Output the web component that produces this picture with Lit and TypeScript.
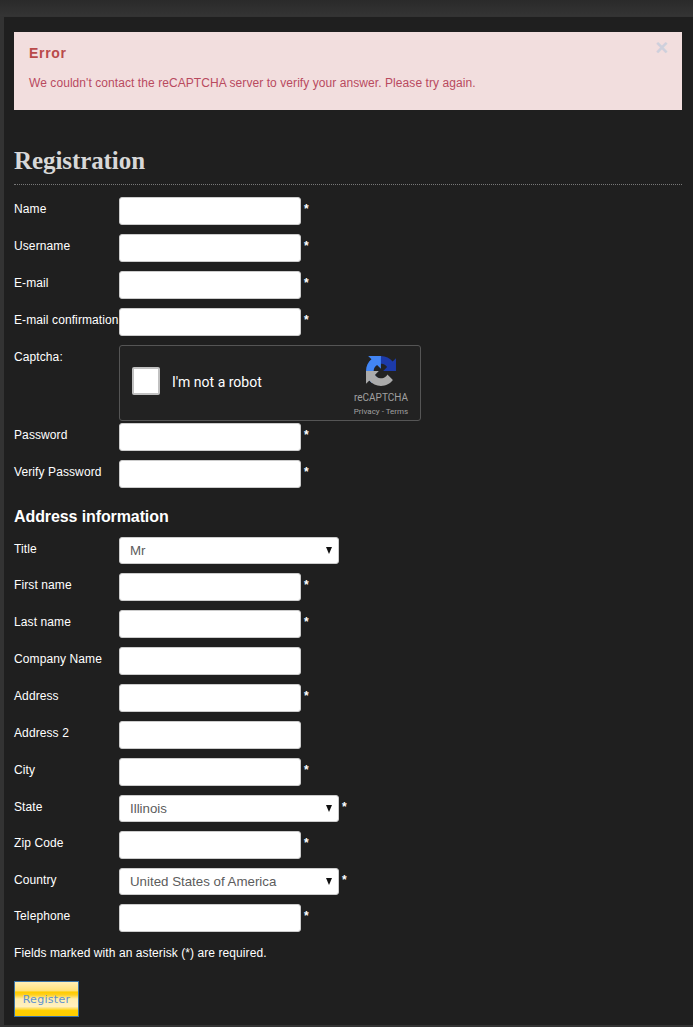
import { LitElement, html, css, svg } from "lit";
import { customElement } from "lit/decorators.js";

type Row = { label: string; req?: boolean; select?: string };

const top: Row[] = [
  { label: "Name", req: true },
  { label: "Username", req: true },
  { label: "E-mail", req: true },
  { label: "E-mail confirmation", req: true },
];
const pw: Row[] = [
  { label: "Password", req: true },
  { label: "Verify Password", req: true },
];
const addr: Row[] = [
  { label: "Title", select: "Mr" },
  { label: "First name", req: true },
  { label: "Last name", req: true },
  { label: "Company Name" },
  { label: "Address", req: true },
  { label: "Address 2" },
  { label: "City", req: true },
  { label: "State", select: "Illinois", req: true },
  { label: "Zip Code", req: true },
  { label: "Country", select: "United States of America", req: true },
  { label: "Telephone", req: true },
];

@customElement("app-root")
export class AppRoot extends LitElement {
  static styles = css`
    :host {
      display: block;
      width: 693px;
      height: 1027px;
      overflow: hidden;
      background: #333;
      font-family: "Liberation Sans", Arial, sans-serif;
      font-size: 12px;
      color: #fff;
    }
    .topbar {
      height: 16px;
      background: linear-gradient(#2a2a2a, #343434);
    }
    .panel {
      margin: 1px 0 0 4px;
      height: 1008px;
      background: #1f1f1f;
      padding: 15px 11px 0 10px;
      box-sizing: border-box;
    }
    .alert {
      position: relative;
      height: 78px;
      box-sizing: border-box;
      background: #f2dede;
      color: #b94a5e;
      padding: 13px 15px;
    }
    .alert h4 {
      margin: 0;
      font-size: 14px;
      line-height: 16px;
      font-weight: bold;
      color: #b94a4a;
      letter-spacing: 0.7px;
    }
    .alert p {
      margin: 14px 0 0;
      line-height: 16px;
      letter-spacing: 0.07px;
    }
    .close {
      position: absolute;
      right: 14px;
      top: 5px;
      font-size: 22px;
      line-height: 22px;
      font-weight: bold;
      color: #ced0dc;
    }
    h1 {
      margin: 36px 0 0;
      font-family: "Liberation Serif", "Times New Roman", serif;
      font-size: 25px;
      line-height: 29px;
      font-weight: bold;
      color: #d8d8d8;
      letter-spacing: -0.08px;
      padding-bottom: 9px;
      border-bottom: 1px dotted #777;
    }
    .form {
      margin-top: 12px;
    }
    .row {
      display: flex;
      align-items: flex-start;
      margin-bottom: 9px;
    }
    label {
      width: 105px;
      flex: none;
      line-height: 14px;
      padding-top: 5px;
      white-space: nowrap;
      letter-spacing: 0.1px;
    }
    .input {
      width: 182px;
      height: 28px;
      box-sizing: border-box;
      background: #fff;
      border: 1px solid #ccc;
      border-radius: 3px;
    }
    .select {
      display: flex;
      align-items: center;
      justify-content: space-between;
      width: 220px;
      height: 27px;
      box-sizing: border-box;
      background: #fff;
      border: 1px solid #ccc;
      border-radius: 3px;
      color: #5c5c5c;
      padding: 0 6px 0 10px;
      font-size: 13.3px;
    }
    .select span:first-child {
      margin-bottom: 1px;
    }
    .caret {
      width: 0;
      height: 0;
      border-left: 3.5px solid transparent;
      border-right: 3.5px solid transparent;
      border-top: 7px solid #111;
    }
    .req {
      margin-left: 3px;
      font-size: 12px;
      line-height: 14px;
      padding-top: 5px;
      font-weight: bold;
    }
    .captcha-row {
      margin-bottom: 2px;
    }
    .captcha {
      display: flex;
      width: 302px;
      height: 76px;
      box-sizing: border-box;
      background: #222;
      border: 1px solid #555;
      border-radius: 3px;
      font-family: Roboto, sans-serif;
    }
    .check {
      width: 28px;
      height: 28px;
      box-sizing: border-box;
      margin: 21px 0 0 12px;
      background: #fff;
      border: 2px solid #c1c1c1;
      border-radius: 2px;
      flex: none;
    }
    .robot {
      margin: 28px 0 0 12px;
      font-size: 14px;
      line-height: 17px;
      color: #fff;
      flex: 1;
    }
    .brand {
      width: 78px;
      flex: none;
      display: flex;
      flex-direction: column;
      align-items: center;
      color: #a0a0a0;
      padding-top: 10px;
      box-sizing: border-box;
    }
    .brand svg {
      display: block;
    }
    .brand .rc {
      font-size: 10px;
      line-height: 12px;
      margin-top: 6px;
    }
    .brand .pt {
      font-size: 8px;
      line-height: 10px;
      margin-top: 3px;
      white-space: nowrap;
    }
    h3 {
      margin: 20px 0 11px;
      font-size: 16px;
      line-height: 18px;
      font-weight: bold;
      color: #fff;
      letter-spacing: -0.1px;
    }
    .note {
      margin: 14px 0 0;
      line-height: 14px;
      letter-spacing: 0.08px;
    }
    .btn {
      display: block;
      margin-top: 21px;
      width: 65px;
      height: 36px;
      box-sizing: border-box;
      border: 1px solid #3a74a8;
      background: linear-gradient(
        #fff0b8 0,
        #ffe27a 25%,
        #ffcc00 30%,
        #ffd020 38%,
        #ffeeb0 50%,
        #fff0c0 72%,
        #ffd000 84%,
        #ffcc00 100%
      );
      color: #5f92d0;
      font-family: "DejaVu Sans", sans-serif;
      font-size: 11px;
      padding: 0;
      text-align: center;
      letter-spacing: 0.3px;
    }
  `;

  private row(r: Row) {
    return html`<div class="row">
      <label>${r.label}</label>
      ${r.select
        ? html`<div class="select"><span>${r.select}</span><span class="caret"></span></div>`
        : html`<div class="input"></div>`}
      ${r.req ? html`<span class="req">*</span>` : ""}
    </div>`;
  }

  private logo() {
    const dark =
      "M64 31.955l-.033-1.37V4.687l-7.16 7.16C50.948 4.674 42.033.093 32.05.093c-10.4 0-19.622 4.96-25.458 12.64l11.736 11.86a15.55 15.55 0 0 1 4.754-5.334c2.05-1.6 4.952-2.906 8.968-2.906.485 0 .86.057 1.135.163 4.976.393 9.288 3.14 11.828 7.124l-8.307 8.307c10.522-.04 22.41-.066 27.295.005";
    const light =
      "M31.862 0l-1.37.033H4.594l7.16 7.16C4.58 13.05 0 21.966 0 31.95c0 10.4 4.96 19.622 12.64 25.458l11.86-11.736a15.55 15.55 0 0 1-5.334-4.754c-1.6-2.05-2.906-4.952-2.906-8.968 0-.485.057-.86.163-1.135.393-4.976 3.14-9.288 7.124-11.828l8.307 8.307c-.04-10.522-.066-22.41.005-27.295";
    return svg`<svg width="30" height="30" viewBox="0 0 64 64">
      <path d=${dark} fill="#1c3aa9"/>
      <path d=${light} fill="#4285f4"/>
      <path d=${dark} transform="rotate(180 32 32)" fill="#ababab"/>
    </svg>`;
  }

  render() {
    return html`
      <div class="topbar"></div>
      <div class="panel">
        <div class="alert">
          <h4>Error</h4>
          <p>We couldn't contact the reCAPTCHA server to verify your answer. Please try again.</p>
          <span class="close">×</span>
        </div>
        <h1>Registration</h1>
        <div class="form">
          ${top.map((r) => this.row(r))}
          <div class="row captcha-row">
            <label>Captcha:</label>
            <div class="captcha">
              <div class="check"></div>
              <div class="robot">I'm not a robot</div>
              <div class="brand">
                ${this.logo()}
                <div class="rc">reCAPTCHA</div>
                <div class="pt">Privacy - Terms</div>
              </div>
            </div>
          </div>
          ${pw.map((r) => this.row(r))}
          <h3>Address information</h3>
          ${addr.map((r) => this.row(r))}
          <p class="note">Fields marked with an asterisk (*) are required.</p>
          <button class="btn">Register</button>
        </div>
      </div>
    `;
  }
}
